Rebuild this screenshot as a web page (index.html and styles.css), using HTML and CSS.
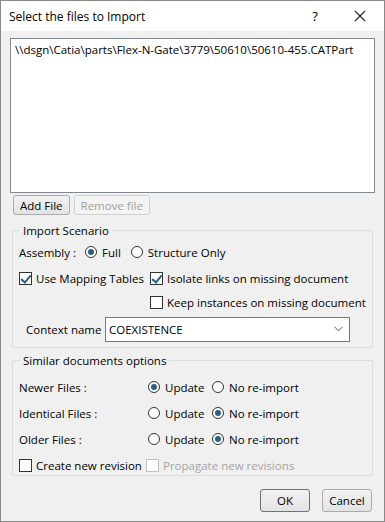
FILE: index.html
```html
<!DOCTYPE html>
<html lang="en">
<head>
    <title>Select the files to Import</title>
    <link rel="stylesheet" href="styles.css">
</head>
<body>
    <div class="window">
        <!--Title bar-->
        <div class="titlebar">
            <span class="title">Select the files to Import</span>
            <span class="help">?</span>
            <span class="close">
                <svg width="12" height="12" viewBox="0 0 12 12"><path d="M1 1L11 11M11 1L1 11" stroke="#222" stroke-width="1.1" fill="none"/></svg>
            </span>
        </div>

        <div class="content">
            <!--File list-->
            <div class="filelist">\\dsgn\Catia\parts\Flex-N-Gate\3779\50610\50610-455.CATPart</div>

            <div class="filebtns">
                <button class="btn">Add File</button>
                <button class="btn" disabled>Remove file</button>
            </div>

            <!--Import scenario-->
            <fieldset class="group scenario">
                <legend>Import Scenario</legend>
                <div class="row">
                    <span class="lbl-assembly">Assembly :</span>
                    <span class="opt full"><span class="radio on"></span>Full</span>
                    <span class="opt"><span class="radio"></span>Structure Only</span>
                </div>
                <div class="row">
                    <span class="opt col-a"><span class="check on"></span>Use Mapping Tables</span>
                    <span class="opt"><span class="check on"></span>Isolate links on missing document</span>
                </div>
                <div class="row indent-b">
                    <span class="opt"><span class="check"></span>Keep instances on missing document</span>
                </div>
                <div class="row context">
                    <span class="lbl-context">Context name</span>
                    <div class="combo">
                        <span>COEXISTENCE</span>
                        <svg width="9" height="6" viewBox="0 0 9 6"><path d="M0.5 0.8L4.5 4.8L8.5 0.8" stroke="#555" fill="none"/></svg>
                    </div>
                </div>
            </fieldset>

            <!--Similar documents-->
            <fieldset class="group similar">
                <legend>Similar documents options</legend>
                <div class="row">
                    <span class="lbl-files">Newer Files :</span>
                    <span class="opt col-up"><span class="radio on"></span>Update</span>
                    <span class="opt"><span class="radio"></span>No re-import</span>
                </div>
                <div class="row">
                    <span class="lbl-files">Identical Files :</span>
                    <span class="opt col-up"><span class="radio"></span>Update</span>
                    <span class="opt"><span class="radio on"></span>No re-import</span>
                </div>
                <div class="row">
                    <span class="lbl-files">Older Files :</span>
                    <span class="opt col-up"><span class="radio"></span>Update</span>
                    <span class="opt"><span class="radio on"></span>No re-import</span>
                </div>
                <div class="row">
                    <span class="opt col-rev"><span class="check"></span>Create new revision</span>
                    <span class="opt disabled"><span class="check"></span>Propagate new revisions</span>
                </div>
            </fieldset>

            <div class="footer">
                <button class="btn dlg default">OK</button>
                <button class="btn dlg">Cancel</button>
            </div>
        </div>
    </div>
</body>
</html>
```

FILE: styles.css
```css
/*global styling*/
* {
    box-sizing: border-box;
    font-family: "Open Sans", "Noto Sans", sans-serif;
}

body {
    margin: 0;
    padding: 0;
    background: #f0f0f0;
}

/*dialog window*/
.window {
    width: 385px;
    height: 522px;
    border: 1px solid #8a8a8a;
    background: #f0f0f0;
    font-size: 11.5px;
    color: #000;
}

/*title bar*/
.titlebar {
    height: 30px;
    background: #fff;
    display: flex;
    align-items: center;
    padding-left: 8px;
}

.title {
    font-size: 12px;
    flex: 1;
}

.help {
    width: 46px;
    text-align: center;
    font-size: 13px;
}

.close {
    width: 46px;
    display: flex;
    justify-content: center;
    padding-right: 2px;
}

/*content area*/
.content {
    padding: 7px 9px 0 9px;
}

.filelist {
    height: 155px;
    background: #fff;
    border: 1px solid #828790;
    padding: 3px 4px;
}

.filebtns {
    display: flex;
    gap: 4px;
    margin-top: 2px;
    padding-left: 3px;
}

/*buttons*/
.btn {
    font-size: 11.5px;
    height: 20px;
    padding: 0 6px;
    background: linear-gradient(#f2f2f2, #e3e3e3);
    border: 1px solid #acacac;
    border-radius: 3px;
    color: #000;
}

.btn:disabled {
    color: #a0a0a0;
    border-color: #cfcfcf;
    background: #f4f4f4;
}

/*group boxes*/
.group {
    margin: 0 2px 0 2px;
    border: 1px solid #d5dfe5;
    border-radius: 2px;
    padding: 0 0 0 6px;
}

.group legend {
    padding: 0 3px;
    margin-left: 1px;
}

.scenario {
    margin-top: 8px;
    height: 125px;
}

.similar {
    margin-top: 5px;
    height: 123px;
}

.row {
    display: flex;
    align-items: center;
    height: 26px;
}

.scenario .row:first-of-type {
    margin-top: 1px;
}

.opt {
    display: flex;
    align-items: center;
    white-space: nowrap;
}

.opt.disabled {
    color: #a6a6a6;
}

.lbl-assembly {
    width: 66px;
}

.full {
    margin-right: 10px;
}

.col-a {
    width: 131px;
}

.indent-b {
    height: 22px;
    padding-left: 131px;
}

.context {
    height: 32px;
    padding-left: 7px;
}

.lbl-context {
    width: 79px;
}

.combo {
    width: 245px;
    height: 25px;
    background: #fff;
    border: 1px solid #7a7a7a;
    display: flex;
    align-items: center;
    justify-content: space-between;
    padding: 0 6px 0 3px;
}

.lbl-files {
    width: 129px;
}

.col-up {
    width: 64px;
}

.col-rev {
    width: 127px;
}

.similar .row:first-of-type {
    margin-top: 6px;
}

/*radio buttons and checkboxes*/
.radio {
    width: 12px;
    height: 12px;
    border: 1px solid #333;
    border-radius: 50%;
    background: #fff;
    margin-right: 5px;
    position: relative;
}

.radio.on::after {
    content: "";
    position: absolute;
    left: 2px;
    top: 2px;
    width: 6px;
    height: 6px;
    border-radius: 50%;
    background: #2c5f85;
}

.check {
    width: 13px;
    height: 13px;
    border: 1px solid #333;
    background: #fff;
    margin-right: 4px;
    position: relative;
}

.disabled .check {
    border-color: #c0c0c0;
}

.check.on::after {
    content: "";
    position: absolute;
    left: 3px;
    top: 0px;
    width: 4px;
    height: 8px;
    border: solid #2c5f85;
    border-width: 0 2px 2px 0;
    transform: rotate(40deg);
}

/*dialog footer*/
.footer {
    display: flex;
    justify-content: flex-end;
    gap: 12px;
    margin-top: 13px;
    padding-right: 3px;
}

.btn.dlg {
    width: 50px;
    height: 23px;
}

.btn.default {
    border-color: #707070;
}
```
